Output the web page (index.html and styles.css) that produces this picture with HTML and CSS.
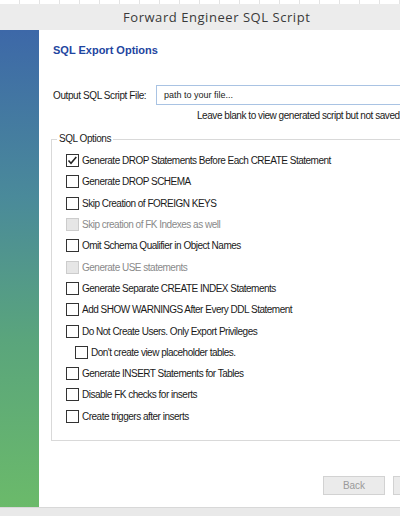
FILE: index.html
```html
<!DOCTYPE html>
<html>
<head>
<meta charset="utf-8">
<link rel="stylesheet" href="styles.css">
</head>
<body>
<div class="topstrip"></div>
<div class="titlebar"><span class="title">Forward Engineer SQL Script</span></div>
<div class="main">
  <div class="sidebar"></div>
  <div class="content">
    <div class="inner">
      <h1 class="heading">SQL Export Options</h1>
      <div class="filerow">
        <span class="filelabel">Output SQL Script File:</span>
        <div class="fileinput">path to your file...</div>
      </div>
      <div class="hint">Leave blank to view generated script but not saved</div>
      <fieldset class="group">
        <legend class="legend">SQL Options</legend>
        <div class="opt"><span class="box checked"><svg viewBox="0 0 13 13" width="13" height="13"><path d="M2.5 6.5 L5 9.2 L10.3 3" fill="none" stroke="#222" stroke-width="1.6"/></svg></span><span>Generate DROP Statements Before Each CREATE Statement</span></div>
        <div class="opt"><span class="box"></span><span>Generate DROP SCHEMA</span></div>
        <div class="opt"><span class="box"></span><span>Skip Creation of FOREIGN KEYS</span></div>
        <div class="opt disabled"><span class="box"></span><span>Skip creation of FK Indexes as well</span></div>
        <div class="opt"><span class="box"></span><span>Omit Schema Qualifier in Object Names</span></div>
        <div class="opt disabled"><span class="box"></span><span>Generate USE statements</span></div>
        <div class="opt"><span class="box"></span><span>Generate Separate CREATE INDEX Statements</span></div>
        <div class="opt"><span class="box"></span><span>Add SHOW WARNINGS After Every DDL Statement</span></div>
        <div class="opt"><span class="box"></span><span>Do Not Create Users. Only Export Privileges</span></div>
        <div class="opt sub"><span class="box"></span><span>Don't create view placeholder tables.</span></div>
        <div class="opt"><span class="box"></span><span>Generate INSERT Statements for Tables</span></div>
        <div class="opt"><span class="box"></span><span>Disable FK checks for inserts</span></div>
        <div class="opt"><span class="box"></span><span>Create triggers after inserts</span></div>
      </fieldset>
      <div class="buttons">
        <button class="btn disabled-btn">Back</button>
        <button class="btn">Next</button>
      </div>
    </div>
  </div>
</div>
<div class="bottombar"></div>
</body>
</html>
```

FILE: styles.css
```css
html, body {
  margin: 0;
  padding: 0;
  width: 400px;
  height: 516px;
  overflow: hidden;
  background: #ffffff;
  font-family: "Liberation Sans", Arial, sans-serif;
}

.topstrip {
  height: 4px;
  background: repeating-linear-gradient(90deg, #ffffff 0 19px, #e4e4e4 19px 20px);
}

.titlebar {
  height: 26px;
  background: #ececec;
  display: flex;
  align-items: center;
  padding-left: 123px;
  box-sizing: border-box;
}

.title {
  font-family: "Open Sans", "Noto Sans", sans-serif;
  font-size: 13px;
  letter-spacing: 0.55px;
  color: #3a3a3a;
  white-space: nowrap;
}

.main {
  display: flex;
  height: 477px;
}

.sidebar {
  width: 39px;
  flex: none;
  background: linear-gradient(180deg, #3d68a8 0%, #4a8a9a 35%, #5aa57c 65%, #6bba6a 100%);
}

.content {
  flex: 1;
  overflow: hidden;
  position: relative;
}

.inner {
  width: 420px;
  padding-left: 14px;
  box-sizing: border-box;
}

.heading {
  margin: 0;
  padding-top: 13px;
  font-size: 11px;
  font-weight: bold;
  color: #1e45a0;
  height: 14px;
  line-height: 14px;
}

.filerow {
  display: flex;
  align-items: center;
  margin-top: 28px;
  height: 20px;
}

.filelabel {
  font-size: 10px;
  letter-spacing: -0.4px;
  color: #1a1a1a;
  width: 103px;
  flex: none;
  white-space: nowrap;
}

.fileinput {
  width: 300px;
  height: 20px;
  box-sizing: border-box;
  border: 1px solid #a9c3e3;
  font-size: 9px;
  color: #222;
  padding-left: 7px;
  line-height: 18px;
}

.hint {
  margin-top: 4px;
  padding-left: 144px;
  font-size: 10px;
  letter-spacing: -0.45px;
  color: #1a1a1a;
  white-space: nowrap;
  height: 14px;
  line-height: 14px;
}

.group {
  margin: 10px 0 0 -2px;
  padding: 5px 0 13px 14px;
  border: 1px solid #d9d9d9;
  width: 420px;
  box-sizing: border-box;
}

.legend {
  font-size: 10px;
  letter-spacing: -0.45px;
  color: #1a1a1a;
  padding: 0 2px;
  margin-left: -9px;
  line-height: 12px;
}

.opt {
  display: flex;
  align-items: center;
  height: 21.3px;
  font-size: 10px;
  letter-spacing: -0.5px;
  color: #1a1a1a;
  white-space: nowrap;
}

.opt.sub {
  padding-left: 9px;
}

.box {
  width: 13px;
  height: 13px;
  box-sizing: border-box;
  border: 1px solid #333333;
  background: #ffffff;
  margin-right: 3px;
  flex: none;
  display: flex;
}

.box svg {
  margin: -1px;
}

.opt.disabled {
  color: #8a8a8a;
}

.opt.disabled .box {
  border-color: #cccccc;
  background: #e6e6e6;
}

.buttons {
  display: flex;
  gap: 8px;
  margin-top: 35px;
  padding-left: 270px;
}

.btn {
  width: 62px;
  height: 19px;
  border: 1px solid #d2d2d2;
  background: #ebebeb;
  font-family: "Liberation Sans", Arial, sans-serif;
  font-size: 10px;
  color: #222;
  padding: 0;
}

.disabled-btn {
  color: #9a9a9a;
}

.bottombar {
  height: 9px;
  background: #e9e9e9;
  border-top: 1px solid #d8d8d8;
  box-sizing: border-box;
}
```
